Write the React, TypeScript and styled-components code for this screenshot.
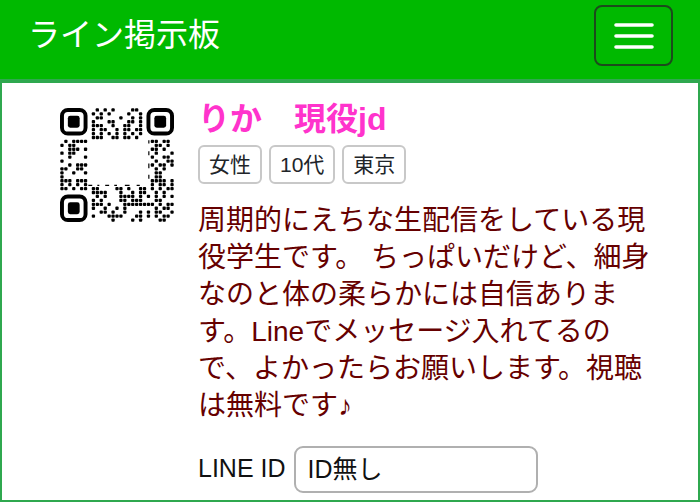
import React from 'react';
import styled, { createGlobalStyle } from 'styled-components';

const GlobalStyle = createGlobalStyle`
  *, *::before, *::after { box-sizing: border-box; }
  body {
    margin: 0;
    background: #fff;
    color: #212529;
    font-family: "Liberation Sans", "Noto Sans CJK JP", sans-serif;
  }
`;

const Header = styled.header`
  display: flex;
  align-items: center;
  justify-content: space-between;
  padding: 5px 27px 13px 28px;
  background: #00b900;
`;

const Brand = styled.a`
  color: #fff;
  font-size: 32px;
  line-height: 48px;
  padding-bottom: 2px;
  text-decoration: none;
`;

const MenuButton = styled.button`
  display: flex;
  align-items: center;
  justify-content: center;
  width: 79px;
  height: 61px;
  padding: 0;
  border: 2px solid #1c4a1c;
  border-radius: 8px;
  background: transparent;
`;

const Card = styled.article`
  display: flex;
  align-items: flex-start;
  gap: 24px;
  padding: 17px 40px 7px 58px;
  border: 2px solid #2fa84f;
  border-top-width: 4px;
`;

const QrImage = styled.svg`
  flex: none;
  width: 114px;
  height: 114px;
  margin-top: 8px;
`;

const Details = styled.div`
  flex: 1;
  min-width: 0;
`;

const Name = styled.h2`
  margin: 0;
  color: #ff33cc;
  font-size: 32px;
  font-weight: 700;
  line-height: 38px;
`;

const Tags = styled.div`
  display: flex;
  gap: 7px;
  margin-top: 7px;
`;

const Tag = styled.button`
  height: 39px;
  padding: 0 9px;
  border: 2px solid #c8c8c8;
  border-radius: 6px;
  background: #fff;
  color: #212529;
  font-family: inherit;
  font-size: 21px;
  line-height: 34px;
`;

const Message = styled.p`
  margin: 18px 0 0;
  color: #660000;
  font-size: 28px;
  line-height: 37px;
`;

const IdRow = styled.div`
  display: flex;
  align-items: center;
  gap: 8px;
  margin-top: 22px;
`;

const IdLabel = styled.label`
  padding-bottom: 4px;
  font-size: 25px;
  line-height: 40px;
  color: #111;
  white-space: nowrap;
`;

const IdInput = styled.input`
  width: 244px;
  height: 47px;
  padding: 0 12px 6px;
  border: 2px solid #b0b0b0;
  border-radius: 9px;
  background: #fff;
  color: #111;
  font-family: inherit;
  font-size: 25px;
`;

const QR_ROWS = [
  '.........#.#.#....##.........',
  '........#.#.#....#..#........',
  '.........##....#..#.#........',
  '........#...##...##.#........',
  '........###..#..##..#........',
  '........#.##..#.##.##........',
  '........#.#.#.#.#.#.#........',
  '........###..##.##.#.........',
  '.#.####................##.##.',
  '#.##....................##.#.',
  '..###.#................##.#..',
  '#.##....................#...#',
  '..#...#................#..##.',
  '#.......................#..##',
  '..#.###................#.##.#',
  '##..##..................#.#..',
  '#..#..#.................##...',
  '#.......................##...',
  '###.###................####.#',
  '#.#.#.#................#.##.#',
  '##.#.##.##....##.#..##.#.#.##',
  '........####...#..#.##..#.#..',
  '.........#.#...####.#.#.#.#.#',
  '........#.#....##.###...##...',
  '........###.#...########.#.##',
  '........#..#..#.#.......#.##.',
  '..........##.#..#...#.#.##..#',
  '........#...####...##.#.#.##.',
  '.............#....#.#....##..',
];

const FINDERS = [[0, 0], [22, 0], [0, 22]];

function QrCode() {
  return (
    <QrImage viewBox="0 0 29 29" role="img" aria-label="QR">
      {QR_ROWS.flatMap((row, y) =>
        row.split('').map((cell, x) =>
          cell === '#' ? (
            <rect key={`${x}-${y}`} x={x + 0.08} y={y + 0.08} width="0.84" height="0.84" rx="0.25" />
          ) : null
        )
      )}
      <path d="M7.2 19.7h1M9.5 19.7h.5M11.5 19.7h1M13.8 19.7h.7M16.5 19.7h1.2M19.5 19.7h.8M22.6 8.2v.8M22.6 11v1M22.6 14.1v1.2M22.6 17v1" stroke="#000" strokeWidth="0.3" />
      {FINDERS.map(([x, y]) => (
        <g key={`${x}-${y}`}>
          <rect x={x + 0.5} y={y + 0.5} width="6" height="6" rx="1.5" fill="none" stroke="#000" />
          <rect x={x + 2} y={y + 2} width="3" height="3" rx="0.6" />
        </g>
      ))}
    </QrImage>
  );
}

export default function App() {
  return (
    <>
      <GlobalStyle />
      <Header>
        <Brand href="#">ライン掲示板</Brand>
        <MenuButton type="button" aria-label="メニュー">
          <svg width="40" height="26" viewBox="0 0 40 26" stroke="#fff" strokeWidth="3.6" strokeLinecap="round">
            <path d="M2 2h36M2 13h36M2 24h36" />
          </svg>
        </MenuButton>
      </Header>
      <Card>
        <QrCode />
        <Details>
          <Name>りか　現役jd</Name>
          <Tags>
            <Tag type="button">女性</Tag>
            <Tag type="button">10代</Tag>
            <Tag type="button">東京</Tag>
          </Tags>
          <Message>
            周期的にえちな生配信をしている現役学生です。 ちっぱいだけど、細身なのと体の柔らかには自信あります。Lineでメッセージ入れてるので、よかったらお願いします。視聴は無料です♪
          </Message>
          <IdRow>
            <IdLabel htmlFor="line-id">LINE ID</IdLabel>
            <IdInput id="line-id" type="text" defaultValue="ID無し" readOnly />
          </IdRow>
        </Details>
      </Card>
    </>
  );
}
